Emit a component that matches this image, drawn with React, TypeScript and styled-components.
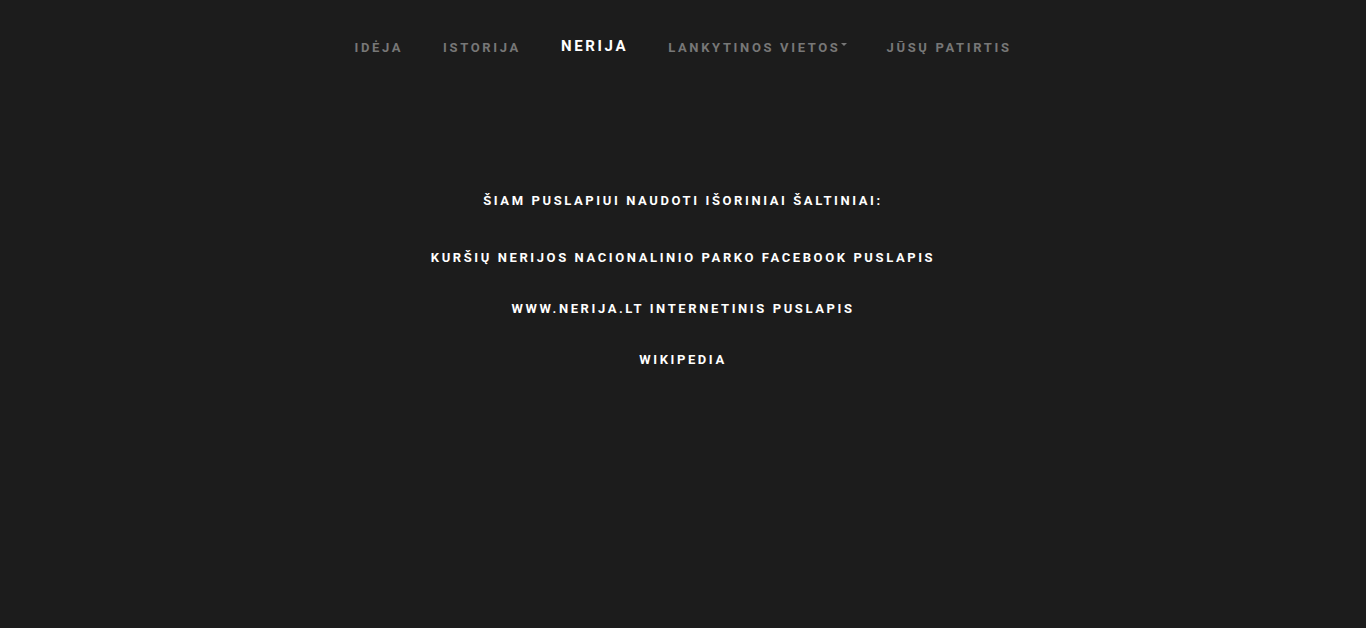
import React from "react";
import styled, { createGlobalStyle } from "styled-components";

const Global = createGlobalStyle`
  html, body { margin: 0; padding: 0; background: #1c1c1c; }
  body { font-family: Roboto, "Noto Sans", sans-serif; min-height: 628px; }
`;

const Page = styled.div`
  min-height: 628px;
  background: #1c1c1c;
`;

const Nav = styled.nav`
  display: flex;
  justify-content: center;
  align-items: center;
  padding-top: 37px;
  height: 20px;
`;

const NavItem = styled.a<{ $active?: boolean }>`
  padding: 0 20px;
  font-family: Roboto, sans-serif;
  font-weight: 700;
  font-size: ${(p) => (p.$active ? "15px" : "13px")};
  letter-spacing: 2.65px;
  color: ${(p) => (p.$active ? "#ffffff" : "#777777")};
  text-decoration: none;
  text-transform: uppercase;
  display: inline-flex;
  align-items: center;
  margin-top: ${(p) => (p.$active ? "-2px" : "0")};
`;

const Caret = styled.span`
  display: inline-block;
  width: 0;
  height: 0;
  margin-left: 0;
  margin-top: -6px;
  border-left: 3px solid transparent;
  border-right: 3px solid transparent;
  border-top: 3px solid #777777;
`;

const Content = styled.main`
  display: flex;
  flex-direction: column;
  align-items: center;
  padding-top: 134px;
`;

const Heading = styled.h3`
  margin: 0 0 37px;
  font-family: Roboto, sans-serif;
  font-weight: 700;
  font-size: 13px;
  letter-spacing: 2.6px;
  color: #ffffff;
  line-height: 20px;
`;

const Source = styled.a`
  display: block;
  font-family: Roboto, sans-serif;
  font-weight: 700;
  font-size: 13px;
  letter-spacing: 2.6px;
  color: #ffffff;
  text-decoration: none;
  line-height: 20px;
  margin-bottom: 31px;
`;

export default function App() {
  return (
    <Page>
      <Global />
      <Nav>
        <NavItem href="#">Idėja</NavItem>
        <NavItem href="#">Istorija</NavItem>
        <NavItem href="#" $active>Nerija</NavItem>
        <NavItem href="#">
          Lankytinos vietos<Caret />
        </NavItem>
        <NavItem href="#">Jūsų patirtis</NavItem>
      </Nav>
      <Content>
        <Heading>ŠIAM PUSLAPIUI NAUDOTI IŠORINIAI ŠALTINIAI:</Heading>
        <Source href="#">KURŠIŲ NERIJOS NACIONALINIO PARKO FACEBOOK PUSLAPIS</Source>
        <Source href="#">WWW.NERIJA.LT INTERNETINIS PUSLAPIS</Source>
        <Source href="#">WIKIPEDIA</Source>
      </Content>
    </Page>
  );
}
